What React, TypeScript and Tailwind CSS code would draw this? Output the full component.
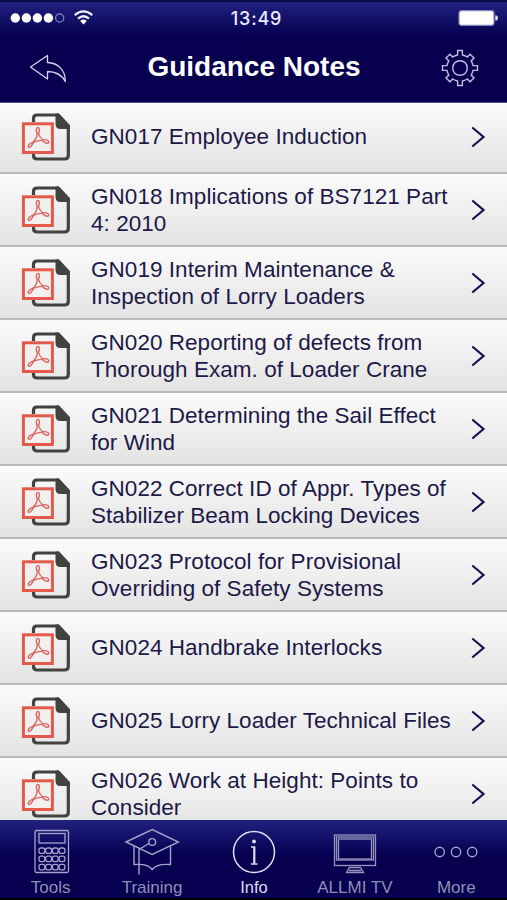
import type { ReactNode } from "react";

const notes = [
  ["GN017 Employee Induction"],
  ["GN018 Implications of BS7121 Part", "4: 2010"],
  ["GN019 Interim Maintenance &", "Inspection of Lorry Loaders"],
  ["GN020 Reporting of defects from", "Thorough Exam. of Loader Crane"],
  ["GN021 Determining the Sail Effect", "for Wind"],
  ["GN022 Correct ID of Appr. Types of", "Stabilizer Beam Locking Devices"],
  ["GN023 Protocol for Provisional", "Overriding of Safety Systems"],
  ["GN024 Handbrake Interlocks"],
  ["GN025 Lorry Loader Technical Files"],
  ["GN026 Work at Height: Points to", "Consider"],
];

function PdfIcon() {
  return (
    <svg className="h-[50px] w-[50px] shrink-0" viewBox="0 0 50 50" fill="none">
      <path
        d="M12.500 10V6.500Q12.500 3 16 3H37L47.300 14V43.200Q47.300 47 43.500 47H16.300Q12.500 47 12.500 43.200V40"
        stroke="#42433f"
        strokeWidth="3.200"
      />
      <path d="M34.500 1.500H38L49 13.500V17H39.500Q34.500 17 34.500 12Z" fill="#42433f" />
      <rect x="2.400" y="11.800" width="29" height="28.700" fill="#f2f0ef" stroke="#e35a4c" strokeWidth="3" />
      <path
        d="M17 15.500C14.900 15.500 15 18.800 16.100 21.600C16.500 24.500 15 27 12.500 29.800C8.700 31.100 6.300 33.900 7.400 35.100C8.800 36.400 11.200 33.100 12.800 30.200C16 28.800 18.600 28.200 21.200 28.400C24 31.300 27 31.900 27.700 30.400C28.300 28.500 25 27.300 21.800 27.800C19.500 26 18.200 24 17.500 21.600C18.600 18.700 18.900 15.500 17 15.500Z"
        stroke="#d96660"
        strokeWidth="1.400"
      />
    </svg>
  );
}

function BackIcon() {
  return (
    <svg className="h-[30px] w-[38px]" viewBox="0 0 38 30" fill="none" stroke="#d6d6f2" strokeWidth="1.300">
      <path d="M1.500 14L18.500 2.500V9.500C29 10 36.500 17 36.300 28.500C32.500 21.500 27.500 18.500 18.500 18.500V26Z" strokeLinejoin="round" />
    </svg>
  );
}

function GearIcon() {
  return (
    <svg className="h-[38px] w-[38px]" viewBox="0 0 38 38" fill="none" stroke="#c0c0e2" strokeWidth="1.400">
      <path d="M16.600 1.500H21.400V6Q24 6.500 26.300 8L29 5.300L33 9L30.200 11.900Q31.500 14 32 16.600H36.500V21.400H32Q31.500 24 30.200 26.100L33 29L29 32.700L26.300 30Q24 31.500 21.400 32V36.500H16.600V32Q14 31.500 11.700 30L9 32.700L5 29L7.800 26.100Q6.500 24 6 21.400H1.500V16.600H6Q6.500 14 7.800 11.900L5 9L9 5.300L11.700 8Q14 6.500 16.600 6Z" />
      <circle cx="19" cy="19" r="7.300" />
    </svg>
  );
}

function StatusBar() {
  return (
    <div className="grid h-[32px] grid-cols-3 items-center">
      <svg className="ml-[10px] h-[18px] w-[90px]" viewBox="0 0 90 18" fill="#fff">
        <circle cx="5.300" cy="9" r="4.700" />
        <circle cx="16.400" cy="9" r="4.700" />
        <circle cx="27.400" cy="9" r="4.700" />
        <circle cx="38.400" cy="9" r="4.700" />
        <circle cx="49.700" cy="9" r="4.100" fill="none" stroke="#8585cf" strokeWidth="1.200" />
        <g fill="none" stroke="#eeeefc" strokeWidth="2.200">
          <path d="M64.700 6.200Q73.500 -1.300 82.300 6.200" />
          <path d="M68 9.600Q73.500 4.900 79 9.600" />
        </g>
        <path d="M70.200 12Q73.500 9.200 76.800 12L73.500 15.500Z" />
      </svg>
      <div className="pl-[6px] text-center font-[Inter,sans-serif] text-[18px] font-medium tracking-[0.800px] text-[#ececff]">13:49</div>
      <svg className="mr-[8px] h-[18px] w-[42px] justify-self-end" viewBox="0 0 42 18">
        <rect x="2" y="1.700" width="35" height="14.600" rx="2.500" fill="#fff" stroke="#8585bd" strokeWidth="1.200" />
        <path d="M38.300 6.200Q41 6.500 41 9T38.300 11.800Z" fill="#dcdcf0" />
      </svg>
    </div>
  );
}

function ToolsIcon() {
  const keys = [23.5, 31.7, 39.9];
  return (
    <svg className="ml-[2px] h-[46px] w-[38px]" viewBox="0 0 38 46" fill="none" stroke="#a3a3cc" strokeWidth="1.300">
      <rect x="2" y="1.500" width="33.500" height="42" rx="1.500" />
      <rect x="6" y="4.500" width="26" height="9.500" />
      {keys.map((y) => (
        <g key={y}>
          <rect x="6" y={y - 4.500} width="5.800" height="5.400" rx="2" />
          <rect x="12.700" y={y - 4.500} width="5.800" height="5.400" rx="2" />
          <rect x="19.400" y={y - 4.500} width="5.800" height="5.400" rx="2" />
          <rect x="26.100" y={y - 4.500} width="5.800" height="5.400" rx="2" />
        </g>
      ))}
    </svg>
  );
}

function TrainingIcon() {
  return (
    <svg className="h-[48px] w-[56px]" viewBox="0 0 56 48" fill="none" stroke="#a3a3cc" strokeWidth="1.400">
      <path d="M2 14L28.200 1.500L54.500 14L28.200 26.500Z" />
      <path d="M10 18V36.500Q24 35.500 28.200 41.500Q32.500 35.500 46.500 36.500V18" />
      <circle cx="28.200" cy="14" r="3.400" />
      <path d="M25 15.500L15 21.500V46.500" />
    </svg>
  );
}

function InfoIcon() {
  return (
    <svg className="ml-px h-[44px] w-[44px]" viewBox="0 0 44 44" fill="none" stroke="#dedef7" strokeWidth="1.500">
      <circle cx="22" cy="22" r="20.500" />
      <circle cx="22" cy="11.500" r="1.900" fill="#dedef7" stroke="none" />
      <path d="M22.300 16.500V33.500" strokeWidth="2.200" />
      <path d="M19 17H22.500M19 34H25.500" />
    </svg>
  );
}

function TvIcon() {
  return (
    <svg className="mt-[3px] h-[42px] w-[44px]" viewBox="0 0 44 42" fill="none" stroke="#9595bd" strokeWidth="1.300">
      <rect x="1.500" y="2" width="41" height="30.500" />
      <rect x="3.500" y="4" width="37" height="23" />
      <rect x="5.500" y="6" width="33" height="20" />
      <path d="M16.500 34.500H27.500L30.500 39.500H13.500ZM16 37.500H28" />
    </svg>
  );
}

function MoreIcon() {
  return (
    <svg className="h-[12px] w-[46px]" viewBox="0 0 46 12" fill="none" stroke="#a3a3cc" strokeWidth="1.400">
      <circle cx="6.700" cy="6" r="4.700" />
      <circle cx="23" cy="6" r="4.700" />
      <circle cx="39.200" cy="6" r="4.700" />
    </svg>
  );
}

function Tab({ icon, label, active }: { icon: ReactNode; label: string; active?: boolean }) {
  return (
    <div className="flex flex-col items-center">
      <div className="flex h-[64px] items-center justify-center">{icon}</div>
      <span
        className={
          active
            ? "-mt-[7px] pl-px text-[16.500px] leading-[21px] whitespace-nowrap text-[#dedef5]"
            : "-mt-[7px] text-[17px] leading-[21px] whitespace-nowrap text-[#8f8fb8]"
        }
      >
        {label}
      </span>
    </div>
  );
}

export default function App() {
  return (
    <div className="flex h-[900px] w-[507px] flex-col overflow-hidden bg-[#06004f] font-['Liberation_Sans',Arial,sans-serif]">
      <header className="relative z-10 h-[103px] shrink-0 border-t-2 border-b border-t-[#0c0a45] border-b-[#4c4a91] bg-linear-to-b from-[#212180] to-[#06004f] to-[36px]">
        <StatusBar />
        <div className="mt-[3px] flex h-[62px] items-center justify-between pr-[28px] pl-[29px]">
          <BackIcon />
          <h1 className="-mt-[2px] text-[28px] font-bold text-white">Guidance Notes</h1>
          <GearIcon />
        </div>
      </header>

      <main className="-mt-[2px] h-[719px] shrink-0 overflow-hidden bg-[#eee]">
        {notes.map((lines) => (
          <div
            key={lines[0]}
            className="flex h-[73px] items-center border-b-2 border-[#b9b9bb] bg-linear-to-b from-[#fbfbfb] to-[#e3e3e3] pr-[21px] pl-[21px]"
          >
            <PdfIcon />
            <div className="ml-[20px] flex-1 text-[22.500px] leading-[27px] tracking-[0.040px] whitespace-nowrap text-[#1d1948]">
              {lines.map((line) => (
                <div key={line}>{line}</div>
              ))}
            </div>
            <svg className="h-[24px] w-[16px] shrink-0" viewBox="0 0 16 24" fill="none" stroke="#15104f" strokeWidth="2.200">
              <path d="M2.300 2.500L13.500 12L2.300 21.500" />
            </svg>
          </div>
        ))}
      </main>

      <nav className="grid h-[80px] shrink-0 grid-cols-5 border-b-2 border-black bg-linear-to-b from-[#212180] to-[#06004f] to-[36px]">
        <Tab icon={<ToolsIcon />} label="Tools" />
        <Tab icon={<TrainingIcon />} label="Training" />
        <Tab icon={<InfoIcon />} label="Info" active />
        <Tab icon={<TvIcon />} label="ALLMI TV" />
        <Tab icon={<MoreIcon />} label="More" />
      </nav>
    </div>
  );
}
